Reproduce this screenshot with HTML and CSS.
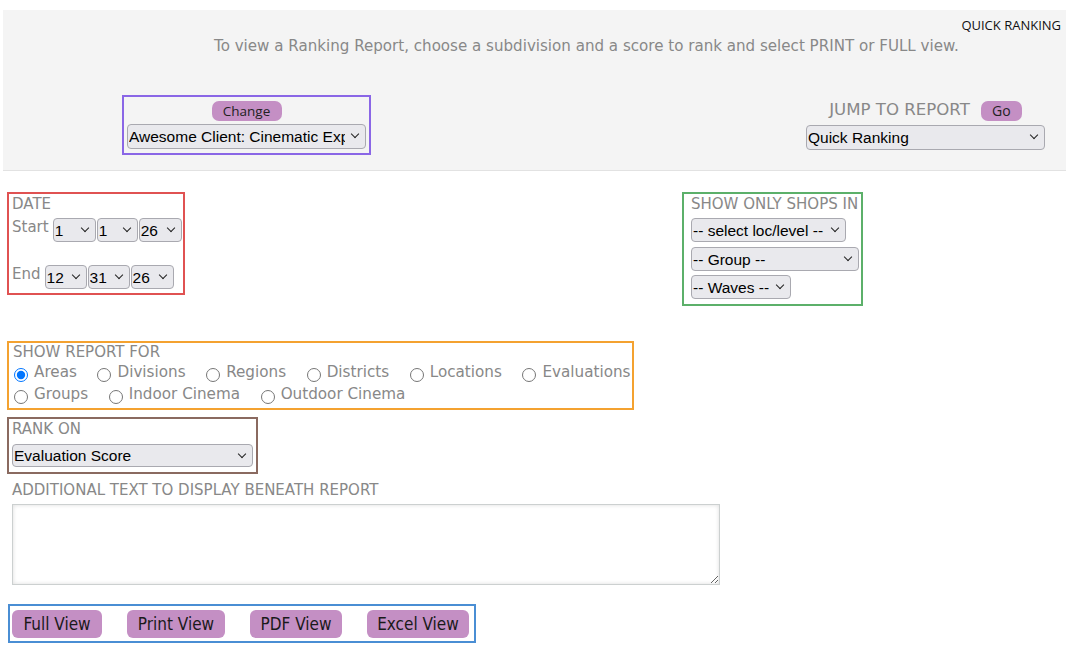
FILE: index.html
```html
<!DOCTYPE html>
<html>
<head>
<meta charset="utf-8">
<link rel="stylesheet" href="styles.css">
</head>
<body>
<div class="header">
  <div class="title">QUICK RANKING</div>
  <div class="subtitle">To view a Ranking Report, choose a subdivision and a score to rank and select PRINT or FULL view.</div>
  <div class="header-row">
    <div class="client-box">
      <button class="pill small">Change</button>
      <span class="sw client"><select class="sel"><option>Awesome Client: Cinematic Experience</option></select></span>
    </div>
    <div class="jump">
      <div class="jump-line"><span class="jump-label">JUMP TO REPORT</span><button class="pill small go">Go</button></div>
      <span class="sw jump-sel"><select class="sel"><option>Quick Ranking</option></select></span>
    </div>
  </div>
</div>

<div class="top-row">
  <div class="box date-box">
    <div class="label">DATE</div>
    <div class="date-line start">
      <span class="dl">Start</span>
      <span class="sw d43"><select class="sel"><option>1</option></select></span>
      <span class="sw d41"><select class="sel"><option>1</option></select></span>
      <span class="sw d43"><select class="sel"><option>26</option></select></span>
    </div>
    <div class="date-line end">
      <span class="dl">End</span>
      <span class="sw d42"><select class="sel"><option>12</option></select></span>
      <span class="sw d42"><select class="sel"><option>31</option></select></span>
      <span class="sw d43"><select class="sel"><option>26</option></select></span>
    </div>
  </div>
  <div class="box shops-box">
    <div class="label">SHOW ONLY SHOPS IN</div>
    <span class="sw s1"><select class="sel"><option>-- select loc/level --</option></select></span>
    <span class="sw s2"><select class="sel"><option>-- Group --</option></select></span>
    <span class="sw s3"><select class="sel"><option>-- Waves --</option></select></span>
  </div>
</div>

<div class="box report-box">
  <div class="label">SHOW REPORT FOR</div>
  <div class="radios">
    <label class="r"><input type="radio" name="sub" checked>Areas</label>
    <label class="r"><input type="radio" name="sub">Divisions</label>
    <label class="r"><input type="radio" name="sub">Regions</label>
    <label class="r"><input type="radio" name="sub">Districts</label>
    <label class="r"><input type="radio" name="sub">Locations</label>
    <label class="r"><input type="radio" name="sub">Evaluations</label>
  </div>
  <div class="radios">
    <label class="r"><input type="radio" name="sub">Groups</label>
    <label class="r"><input type="radio" name="sub">Indoor Cinema</label>
    <label class="r"><input type="radio" name="sub">Outdoor Cinema</label>
  </div>
</div>

<div class="box rank-box">
  <div class="label">RANK ON</div>
  <span class="sw rank-sel"><select class="sel"><option>Evaluation Score</option></select></span>
</div>

<div class="extra">
  <div class="label">ADDITIONAL TEXT TO DISPLAY BENEATH REPORT</div>
  <textarea class="ta"></textarea>
</div>

<div class="box btn-box">
  <button class="pill big b1">Full View</button>
  <button class="pill big b2">Print View</button>
  <button class="pill big b3">PDF View</button>
  <button class="pill big b4">Excel View</button>
</div>
</body>
</html>
```
FILE: styles.css
```css
body {
  margin: 0;
  padding: 10px 0 0 0;
  font-family: "DejaVu Sans", "Liberation Sans", sans-serif;
  color: #888;
  background: #fff;
}
.header {
  margin-left: 3px;
  width: 1063px;
  height: 160px;
  background: #f4f4f4;
  border-bottom: 1px solid #e2e2e2;
}
.title {
  text-align: right;
  padding: 7px 5px 0 0;
  height: 17px;
  font-family: "Open Sans", "Liberation Sans", sans-serif;
  font-size: 13px;
  color: #111;
  line-height: 17px;
}
.subtitle {
  margin-top: 2px;
  padding-left: 211px;
  font-size: 15.1px;
  color: #888;
  line-height: 20px;
  height: 20px;
  white-space: nowrap;
}
.header-row {
  display: flex;
  justify-content: space-between;
  align-items: flex-start;
  padding: 39px 21px 0 119px;
}
.client-box {
  width: 245px;
  height: 56px;
  border: 2px solid #8a66e6;
  display: flex;
  flex-direction: column;
  align-items: center;
}
.pill {
  background: #c48fc4;
  border: none;
  border-radius: 7px;
  color: #222;
  padding: 0;
  cursor: pointer;
  white-space: nowrap;
}
.pill.small {
  width: 70px;
  height: 20px;
  margin-top: 4px;
  font-family: "Open Sans", "Liberation Sans", sans-serif;
  font-size: 13.5px;
  line-height: 20px;
}
.sw {
  position: relative;
  display: inline-block;
  height: 24px;
}
.sw::after {
  content: "";
  position: absolute;
  right: 8px;
  top: 7px;
  width: 5px;
  height: 5px;
  border-right: 1.6px solid #222;
  border-bottom: 1.6px solid #222;
  transform: rotate(45deg);
  pointer-events: none;
}
.sel {
  -webkit-appearance: none;
  appearance: none;
  display: block;
  width: 100%;
  height: 100%;
  box-sizing: border-box;
  font-family: "Liberation Sans", Arial, sans-serif;
  font-size: 15.5px;
  color: #000;
  background: #e9e9ed;
  border: 1px solid #a9a9b0;
  border-radius: 4px;
  padding: 0 14px 0 1px;
  margin: 0;
  overflow: hidden;
}
.client {
  width: 239px;
  height: 25px;
  margin-top: 3px;
}
.client .sel { padding-right: 20px; }
.jump {
  width: 239px;
  display: flex;
  flex-direction: column;
  align-items: center;
  padding-top: 6px;
}
.jump-line {
  display: flex;
  align-items: center;
  height: 20px;
}
.jump-label {
  font-size: 16.6px;
  color: #888;
  line-height: 20px;
  margin-top: -2px;
}
.pill.go {
  width: 41px;
  margin: 0 0 0 11px;
  font-size: 14px;
}
.jump-sel {
  width: 239px;
  height: 25px;
  margin-top: 4px;
}
.box {
  box-sizing: border-box;
}
.label {
  font-size: 15px;
  line-height: 18px;
  color: #888;
  white-space: nowrap;
}
.top-row {
  display: flex;
  align-items: flex-start;
  margin-top: 21px;
  padding-left: 7px;
}
.date-box {
  width: 178px;
  height: 103px;
  border: 2px solid #e05252;
  padding: 1px 0 0 3px;
}
.date-line {
  display: flex;
  align-items: flex-start;
}
.date-line.start { margin-top: 5px; }
.date-line.end { margin-top: 23px; }
.dl {
  font-size: 15px;
  line-height: 18px;
  color: #888;
  margin-right: 4px;
}
.d43 { width: 43px; margin-right: 1px; }
.d42 { width: 42px; margin-right: 1px; }
.d41 { width: 41px; margin-right: 1px; }
.shops-box {
  margin-left: 497px;
  width: 181px;
  height: 114px;
  border: 2px solid #5cb06a;
  padding: 1px 0 0 7px;
  display: flex;
  flex-direction: column;
  align-items: flex-start;
}
.shops-box .sw { margin-bottom: 5px; }
.shops-box .s1 { width: 155px; margin-top: 5px; }
.shops-box .s2 { width: 168px; margin-bottom: 4px; }
.shops-box .s3 { width: 100px; }
.report-box {
  margin: 35px 0 0 7px;
  width: 627px;
  height: 69px;
  border: 2px solid #f4a230;
  padding: 0 0 0 4px;
}
.radios {
  display: flex;
  height: 22px;
  align-items: center;
}
.r {
  display: flex;
  align-items: center;
  font-size: 15.2px;
  color: #888;
  margin-right: 19.6px;
  white-space: nowrap;
}
.r input {
  width: 14px;
  height: 14px;
  margin: 6px 6px 0 1px;
}
.rank-box {
  margin: 7px 0 0 7px;
  width: 251px;
  height: 57px;
  border: 2px solid #8a6a60;
  padding: 1px 0 0 3px;
}
.rank-sel {
  width: 241px;
  height: 23px;
  margin-top: 6px;
}
.extra {
  margin: 7px 0 0 12px;
}
.ta {
  display: block;
  width: 708px;
  height: 81px;
  margin-top: 5px;
  box-sizing: border-box;
  border: 1px solid #ccd0d0;
  box-shadow: inset 0 0 4px #ddd;
  resize: both;
}
.btn-box {
  margin: 19px 0 0 8px;
  width: 468px;
  height: 39px;
  border: 2px solid #4a8ed4;
  padding: 4px 0 0 2px;
  display: flex;
}
.pill.big {
  height: 28px;
  font-family: "DejaVu Sans Condensed", "DejaVu Sans", sans-serif;
  font-stretch: condensed;
  font-size: 17px;
  border-radius: 6px;
  color: #1a1a1a;
}
.b1 { width: 90px; }
.b2 { width: 98px; margin-left: 25px; }
.b3 { width: 92px; margin-left: 25px; }
.b4 { width: 102px; margin-left: 25px; }
```
